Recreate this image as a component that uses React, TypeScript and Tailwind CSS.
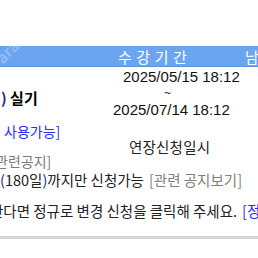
import React from "react";

const font = { fontFamily: '"Noto Sans CJK KR", "Liberation Sans", sans-serif' };
const num = { fontFamily: '"Liberation Sans", "Noto Sans CJK KR", sans-serif' };

export default function App() {
  return (
    <div className="relative w-[258px] h-[258px] overflow-hidden bg-white text-[14px] leading-none text-[#222]" style={font}>
      <div className="h-[46px]" />
      <div className="relative flex h-[21px] items-center bg-[#6ba5f2] border-b border-[#5b94e4] text-white">
        <span className="absolute left-[-6px] top-[-3px] rotate-[-45deg] text-[16px] font-bold text-white/25">ara</span>
        <div className="w-[118px] shrink-0" />
        <div className="w-[127px] shrink-0 text-[15px] tracking-[0.6px] whitespace-nowrap">수 강 기 간</div>
        <div className="text-[15px]">남</div>
      </div>
      <div className="flex h-[102px]">
        <div className="w-[113px] shrink-0 flex flex-col">
          <div className="mt-[22px] h-[16px] flex items-center font-bold text-[15px] text-black whitespace-nowrap ml-[1px]">
            <span className="text-[#1f2a8a]">)</span>&nbsp;실기
          </div>
          <div className="mt-[18px] h-[16px] flex items-center text-[#2b2bf0] whitespace-nowrap ml-[4px]">사용가능]</div>
          <div className="mt-[14px] h-[16px] flex items-center text-[#7a7a7a] whitespace-nowrap ml-[-5px]">관련공지]</div>
        </div>
        <div className="flex flex-col">
          <div className="mt-[1px] h-[16px] flex items-center pl-[10px] whitespace-nowrap text-[15px] text-[#111]" style={num}>2025/05/15 18:12</div>
          <div className="mt-[5px] h-[8px] flex items-center pl-[51px] text-[12px]" style={num}>~</div>
          <div className="mt-[4px] h-[16px] flex items-center whitespace-nowrap text-[15px] text-[#111]" style={num}>2025/07/14 18:12</div>
          <div className="mt-[22px] h-[16px] flex items-center pl-[16px] whitespace-nowrap text-[14.5px] tracking-[0.2px]">연장신청일시</div>
        </div>
      </div>
      <div className="mt-[3px] h-[16px] flex items-center whitespace-nowrap text-[14.5px]">
        <span className="text-[#1f2a8a]">(</span>180일<span className="text-[#1f2a8a]">)</span>까지만 신청가능
        <span className="text-[#808080] ml-[5px]">[관련 공지보기]</span>
      </div>
      <div className="mt-[15px] h-[16px] flex items-center whitespace-nowrap ml-[-10px] text-[14.5px]">
        한다면 정규로 변경 신청을 클릭해 주세요.
        <span className="text-[#2b2bf0] ml-[5px]">[정규</span>
      </div>
      <div className="mt-[17px] h-[3px] bg-[#d6d6d6]" />
    </div>
  );
}
